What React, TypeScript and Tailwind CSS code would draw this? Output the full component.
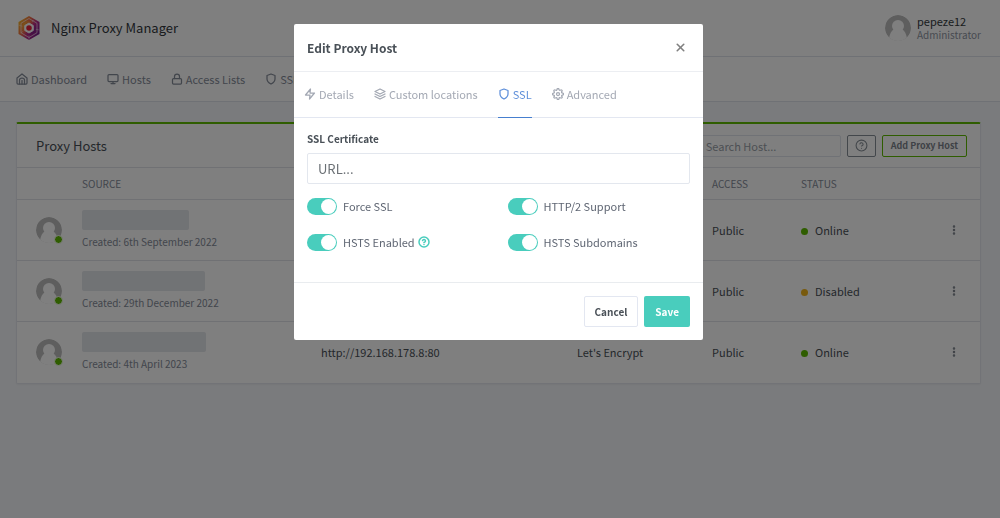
import { useState } from 'react';
import type { ReactNode } from 'react';
import {
  FiHelpCircle,
  FiLayers,
  FiLock,
  FiMonitor,
  FiMoreVertical,
  FiSettings,
  FiShield,
  FiX,
  FiZap,
} from 'react-icons/fi';

const hosts = [
  { id: 1, bar: 'w-[107px]', created: '6th September 2022', destination: 'http://192.168.178.4:80', status: 'Online' },
  { id: 2, bar: 'w-[123px]', created: '29th December 2022', destination: 'http://192.168.178.6:80', status: 'Disabled' },
  { id: 3, bar: 'w-[124px]', created: '4th April 2023', destination: 'http://192.168.178.8:80', status: 'Online' },
];

const HomeIcon = () => (
  <svg viewBox="0 0 24 24" className="size-3" fill="none" stroke="currentColor" strokeWidth="2" strokeLinecap="round" strokeLinejoin="round">
    <path d="M2 10 12 2l10 8v10a2 2 0 0 1-2 2H4a2 2 0 0 1-2-2z" />
    <path d="M7 22v-8a5 4 0 0 1 10 0v8" />
    <path d="M12 15v7" />
  </svg>
);

const Logo = () => (
  <svg viewBox="0 0 44 48" className="h-6 w-[22px]">
    <defs>
      <linearGradient id="hex" x1="0" y1="0.1" x2="1" y2="0.8">
        <stop offset="0" stopColor="#f9c623" />
        <stop offset="0.4" stopColor="#f0694a" />
        <stop offset="0.65" stopColor="#b8288a" />
        <stop offset="1" stopColor="#6b1c8c" />
      </linearGradient>
    </defs>
    <path d="M22 0 43 12v24L22 48 1 36V12z" fill="url(#hex)" />
    <path d="M22 5 38 14.500v19L22 43 6 33.500v-19z" fill="none" stroke="#fff" strokeWidth="2" strokeOpacity="0.6" />
    <path d="M1 18l12 4M31 8l-4 6M22 48v-9M5 34l8-5M43 28l-10-2" stroke="#fff" strokeWidth="1.5" strokeOpacity="0.5" />
    <circle cx="22" cy="24" r="14" fill="url(#hex)" />
    <path d="m22 14 8.500 5v10L22 34l-8.500-5v-10z" fill="#fff" stroke="#fff" strokeWidth="2" strokeLinejoin="round" />
    <circle cx="22" cy="24" r="5.500" fill="#e8203a" />
  </svg>
);

const Avatar = () => (
  <svg viewBox="0 0 26 26" className="size-[26px] rounded-full">
    <circle cx="13" cy="13" r="13" fill="#bdbdbd" />
    <circle cx="13" cy="11" r="6" fill="#fff" />
    <path d="M9 14c-3 2-4 5-5 9v3h18v-3c-1-4-2-7-5-9z" fill="#fff" />
  </svg>
);

const NavItem = ({ icon, children }: { icon: ReactNode; children: ReactNode }) => (
  <a href="#" className="flex items-center gap-[3px] whitespace-nowrap [&>svg]:stroke-[2.5]">
    {icon}
    {children}
  </a>
);

const Tab = ({ icon, active, onClick, children }: { icon: ReactNode; active: boolean; onClick: () => void; children: ReactNode }) => (
  <button
    type="button"
    role="tab"
    aria-selected={active}
    onClick={onClick}
    className={`-mb-px flex items-center gap-[3px] border-b pb-px whitespace-nowrap [&>svg]:stroke-[2.5] ${
      active ? 'border-[#467fcf] text-[#5e8fda]' : 'border-transparent text-[#a3a8b3]'
    }`}
  >
    {icon}
    {children}
  </button>
);

const Switch = ({ label, children }: { label: string; children?: ReactNode }) => (
  <div className="flex h-5 items-center">
    <label className="flex items-center gap-[6px]">
      <input
        type="checkbox"
        defaultChecked
        className="h-[17px] w-[30px] appearance-none rounded-full bg-gray-300 before:m-px before:block before:size-[15px] before:rounded-full before:bg-white checked:bg-[#49cdbd] checked:before:ml-[14px]"
      />
      {label}
    </label>
    {children}
  </div>
);

const EditProxyHost = () => {
  const [tab, setTab] = useState('ssl');

  return (
    <div className="fixed inset-0 flex items-start justify-center overflow-auto bg-black/50 pt-6 pr-[3px]">
      <div role="dialog" aria-labelledby="dialog-title" className="w-[409px] max-w-full rounded-xs bg-white text-[#5f6673]">
        <div className="flex h-12 items-center justify-between border-b border-[#eceef2] px-[13px]">
          <h2 id="dialog-title" className="text-[12px] font-bold text-[#495057]">Edit Proxy Host</h2>
          <button type="button" aria-label="Close" className="mr-[3px] text-[#808080]">
            <FiX className="size-[13px]" strokeWidth={3} />
          </button>
        </div>

        <div role="tablist" className="flex h-[46px] gap-5 border-b border-[#e3e7f1] px-[10px]">
          <Tab icon={<FiZap className="size-3" />} active={tab === 'details'} onClick={() => setTab('details')}>Details</Tab>
          <Tab icon={<FiLayers className="size-3" />} active={tab === 'locations'} onClick={() => setTab('locations')}>Custom locations</Tab>
          <Tab icon={<FiShield className="size-3" />} active={tab === 'ssl'} onClick={() => setTab('ssl')}>SSL</Tab>
          <Tab icon={<FiSettings className="size-3" />} active={tab === 'advanced'} onClick={() => setTab('advanced')}>Advanced</Tab>
        </div>

        <div className="px-[13px] pt-3 pb-[30px]">
          <label htmlFor="certificate" className="mb-[5px] block text-[10px] leading-[18px] font-bold text-[#495057]">SSL Certificate</label>
          <input
            id="certificate"
            type="text"
            placeholder="URL..."
            className="block h-[31px] w-full rounded-xs border border-[#e3e7ee] px-[10px] text-[13px] placeholder:text-[#6b7075]"
          />
          <div className="mt-3 grid grid-cols-2 gap-x-[18px] gap-y-4">
            <Switch label="Force SSL" />
            <Switch label="HTTP/2 Support" />
            <Switch label="HSTS Enabled">
              <button type="button" aria-label="About HSTS" className="ml-[3px] text-[#49cdbd]">
                <FiHelpCircle className="size-3" strokeWidth={3} />
              </button>
            </Switch>
            <Switch label="HSTS Subdomains" />
          </div>
        </div>

        <div className="flex justify-end gap-[6px] border-t border-[#e9ecef] p-[13px] text-[10px] font-bold">
          <button type="button" className="h-[31px] rounded-xs border border-[#e3e7f1] px-[10px] text-[#495057]">Cancel</button>
          <button type="button" className="h-[31px] rounded-xs bg-[#49cdbd] px-[11px] text-white">Save</button>
        </div>
      </div>
    </div>
  );
};

export default function App() {
  return (
    <div className="min-h-screen bg-[#f5f7fb] font-['Noto_Sans_CJK_SC',sans-serif] text-[11px] leading-4 text-[#495057]">
      <header className="flex h-[57px] items-center justify-between border-b border-[#dfe3ea] bg-white pr-[19px] pl-[18px]">
        <a href="#" className="flex items-center gap-[11px] text-[13px] text-[#32373c]">
          <Logo />
          Nginx Proxy Manager
        </a>
        <div className="flex items-center gap-[6px]">
          <Avatar />
          <div className="leading-[14px]">
            <div className="text-[#343a40]">pepeze12</div>
            <div className="text-[10px] text-[#8f96a3]">Administrator</div>
          </div>
        </div>
      </header>

      <nav className="flex h-[45px] items-center gap-5 border-b border-[#dfe3ea] bg-white px-4 text-[#858c99]">
        <NavItem icon={<HomeIcon />}>Dashboard</NavItem>
        <NavItem icon={<FiMonitor className="size-3" />}>Hosts</NavItem>
        <NavItem icon={<FiLock className="size-3" />}>Access Lists</NavItem>
        <NavItem icon={<FiShield className="size-3" />}>SSL Certificates</NavItem>
      </nav>

      <main className="pt-5 pr-[19px] pb-5 pl-4">
        <section className="rounded-xs border border-t-2 border-[#e4e7ee] border-t-[#5eba00] bg-white shadow-xs">
          <div className="flex h-[43px] items-center justify-between pr-[13px] pl-[19px]">
            <h1 className="text-[13px]">Proxy Hosts</h1>
            <div className="flex items-center gap-[6px]">
              <input
                type="search"
                aria-label="Search Host"
                placeholder="Search Host..."
                className="h-[22px] w-[158px] rounded-xs border border-[#e0e4ec] px-[22px] text-[11px] placeholder:text-[#9a9fa8]"
              />
              <button type="button" aria-label="Help" className="flex h-[22px] w-[29px] items-center justify-center rounded-xs border border-[#868e96] text-[#868e96]">
                <FiHelpCircle className="size-[13px]" />
              </button>
              <button type="button" className="h-[22px] rounded-xs border border-[#5eba00] px-2 text-[9px] font-bold text-[#7d838c]">Add Proxy Host</button>
            </div>
          </div>

          <table className="w-full table-fixed text-left">
            <colgroup>
              <col className="w-[53px]" />
              <col />
              <col className="w-[256px]" />
              <col className="w-[135px]" />
              <col className="w-[89px]" />
              <col className="w-[147px]" />
              <col className="w-[44px]" />
            </colgroup>
            <thead>
              <tr className="h-8 border-y border-[#e0e3e9] text-[10px] text-[#858c99] uppercase [&>th]:px-3 [&>th]:font-normal">
                <th></th>
                <th>Source</th>
                <th>Destination</th>
                <th>SSL</th>
                <th>Access</th>
                <th>Status</th>
                <th></th>
              </tr>
            </thead>
            <tbody>
              {hosts.map((host) => (
                <tr key={host.id} className="h-[61px] border-b border-[#e0e3e9] last:border-b-0 [&>td]:px-3">
                  <td className="pl-[19px]!">
                    <div className="relative size-[26px]">
                      <Avatar />
                      <span className="absolute -right-px -bottom-px size-[9px] rounded-full border border-white bg-[#5eba00]" />
                    </div>
                  </td>
                  <td>
                    <div className={`h-5 rounded-xs bg-[#e3e6ea] ${host.bar}`} />
                    <div className="mt-1 text-[10px] text-[#858c99]">Created: {host.created}</div>
                  </td>
                  <td>{host.destination}</td>
                  <td>Let's Encrypt</td>
                  <td>Public</td>
                  <td>
                    <span className={`mr-[7px] inline-block size-[7px] rounded-full ${host.status === 'Online' ? 'bg-[#5eba00]' : 'bg-[#f1b41c]'}`} />
                    {host.status}
                  </td>
                  <td>
                    <button type="button" aria-label="Host actions" className="block text-[#7d838c]">
                      <FiMoreVertical className="size-3" strokeWidth={3} />
                    </button>
                  </td>
                </tr>
              ))}
            </tbody>
          </table>
        </section>
      </main>

      <EditProxyHost />
    </div>
  );
}
